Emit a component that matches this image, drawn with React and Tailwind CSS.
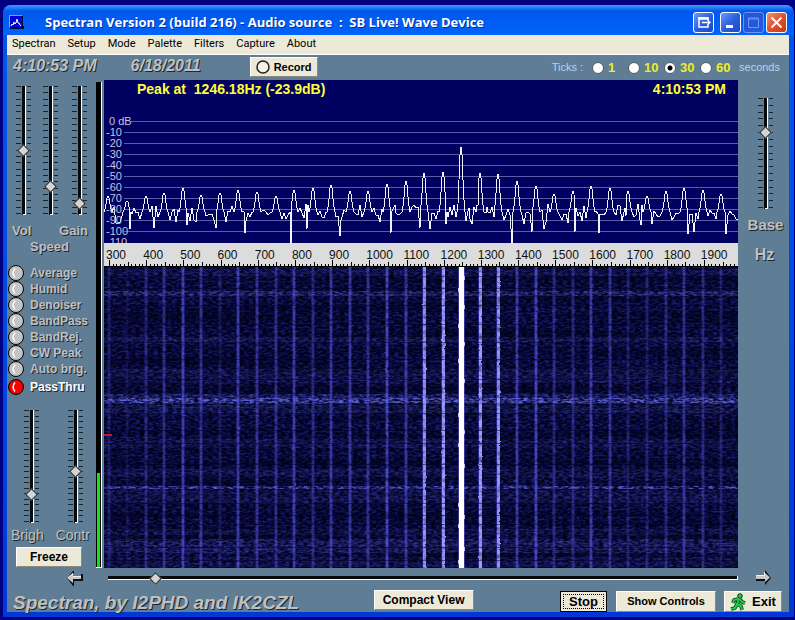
import React from "react";

const menus = ["Spectran", "Setup", "Mode", "Palette", "Filters", "Capture", "About"];

const filters = [
  { name: "Average" },
  { name: "Humid" },
  { name: "Denoiser" },
  { name: "BandPass" },
  { name: "BandRej." },
  { name: "CW Peak" },
  { name: "Auto brig." },
  { name: "PassThru", active: true },
];

const frequencies = Array.from({ length: 17 }, (_, i) => 300 + i * 100);
const levels = ["0 dB", "-10", "-20", "-30", "-40", "-50", "-60", "-70", "-80", "-90", "-100", "-110"];

// top of every 50 Hz harmonic in the plot, left to right
const peakTops = [
  116, 121, 116, 113, 108, 115, 113, 110, 112, 116, 110, 108, 105, 111, 111, 104, 101, 93, 92, 67,
  93, 94, 101, 106, 114, 111, 106, 108, 111, 116, 111, 108, 110, 114,
];

// deep notches and shoulders between the harmonics
const marks = {
  26: 149, 50: 148, 83: 145, 112: 148, 141: 153, 187: 163, 203: 149, 236: 156, 237: 140,
  287: 153, 291: 125, 310: 125, 316: 148, 326: 149, 342: 144, 346: 127, 350: 125, 354: 124,
  365: 128, 370: 127, 374: 126, 383: 127, 390: 137, 408: 163, 428: 152, 440: 149, 471: 152,
  495: 153, 522: 136, 537: 145, 584: 154, 590: 152, 622: 154,
};

// strength of every harmonic in the waterfall
const lines = [
  0.3, 0.15, 0.4, 0.5, 0.7, 0.55, 0.25, 0.65, 0.55, 0.5, 0.65, 0.45, 0.6, 0.6, 0.55, 0.75, 0.6,
  0.95, 1, 0, 1, 0.95, 0.65, 0.75, 0.45, 0.4, 0.65, 0.55, 0.3, 0.35, 0.45, 0.55, 0.45, 0.3,
];

const bands = [
  { y: 2, h: 8, o: 0.2 },
  { y: 24, h: 5, o: 0.5 },
  { y: 70, h: 6, o: 0.25 },
  { y: 102, h: 14, o: 0.2 },
  { y: 127, h: 10, o: 0.45 },
  { y: 131, h: 5, o: 0.85 },
  { y: 138, h: 9, o: 0.3 },
  { y: 172, h: 9, o: 0.2 },
  { y: 202, h: 8, o: 0.2 },
  { y: 219, h: 3, o: 0.85 },
  { y: 223, h: 14, o: 0.2 },
  { y: 262, h: 6, o: 0.2 },
  { y: 272, h: 14, o: 0.35 },
  { y: 290, h: 10, o: 0.2 },
];

const peakX = (i) => 4.5 + i * 18.57;

function buildTrace() {
  let seed = 41;
  const rand = () => {
    seed = (seed * 16807) % 2147483647;
    return seed / 2147483647;
  };
  const points = [];
  for (let x = 0; x <= 634; x += 1) {
    const i = Math.max(0, Math.min(33, Math.round((x - 4.5) / 18.57)));
    const d = Math.round(x - peakX(i));
    const top = peakTops[i];
    if (marks[x]) {
      points.push([x, marks[x]]);
    } else if (Math.abs(d) <= 4) {
      const share = [0, 0.12, 0.5, 0.82, 1][Math.abs(d)];
      points.push([x, Math.round(top + (132 - top) * share)]);
    } else if (x % 2 === 0) {
      points.push([x, Math.round(123 + rand() * 11 + rand() * 11)]);
    }
  }
  return points.map((p) => p.join(",")).join(" ");
}

const trace = buildTrace();

function Spectrum() {
  return (
    <div className="relative h-[163px] bg-[#000060] overflow-hidden">
      <svg className="block w-full h-full" viewBox="0 0 634 163" preserveAspectRatio="none">
        {levels.slice(0, 11).map((level, i) => (
          <rect key={level} x={i === 0 ? 27 : 20} y={41 + i * 11} width="614" height="1" fill="#5c5ca4" />
        ))}
        <polyline points={trace} fill="none" stroke="#f4f4ff" strokeWidth="1" shapeRendering="crispEdges" />
      </svg>
      <div className="absolute inset-x-0 top-0 pt-px pl-[33px] pr-3 flex justify-between text-sm leading-4 font-bold text-[#ffff38] whitespace-pre">
        <span>Peak at  1246.18Hz (-23.9dB)</span>
        <span>4:10:53 PM</span>
      </div>
      <div className="absolute left-0.5 top-9 text-[11px] leading-[11px] text-[#c4c4dc]">
        {levels.map((level, i) => (
          <div key={level} className={i === 0 ? "pl-[3px]" : ""}>
            {level}
          </div>
        ))}
      </div>
    </div>
  );
}

function FrequencyScale() {
  const ticks = Array.from({ length: 171 }, (_, i) => i);
  return (
    <div className="h-6 bg-[#dcdcdc] flex flex-col justify-between">
      <div className="grid grid-cols-17 pt-1 pl-[2px] text-xs leading-4 text-[#101010]">
        {frequencies.map((f) => (
          <span key={f}>{f}</span>
        ))}
      </div>
      <svg className="block w-full h-[7px] shrink-0 -mt-3" viewBox="0 0 634 7" preserveAspectRatio="none">
        <rect x="0" y="6" width="634" height="1" fill="#000" />
        {ticks.map((i) => {
          const h = i % 10 === 0 ? 6 : i % 5 === 0 ? 4 : 2;
          return <rect key={i} x={Math.round(5 + (i * 37.19) / 10)} y={6 - h} width="1" height={h} fill="#000" />;
        })}
      </svg>
    </div>
  );
}

function Waterfall() {
  const gaps = [9, 21, 38, 57, 75, 92, 112, 146, 163, 176, 197, 236, 248, 257, 280, 293];
  return (
    <svg className="block w-full h-0 grow min-h-[280px] bg-[#04042c]" viewBox="0 0 634 301" preserveAspectRatio="none">
      <defs>
        <filter id="floor" x="0" y="0" width="100%" height="100%" colorInterpolationFilters="sRGB">
          <feTurbulence type="fractalNoise" baseFrequency="0.22 0.5" numOctaves="3" seed="5" />
          <feColorMatrix values="0 0 0 0.25 -0.09  0 0 0 0.25 -0.085  0 0 0 0.95 -0.24  0 0 0 0 1" />
        </filter>
        <filter id="rows" x="0" y="0" width="100%" height="100%" colorInterpolationFilters="sRGB">
          <feTurbulence type="fractalNoise" baseFrequency="0.004 0.11" numOctaves="3" seed="12" />
          <feColorMatrix values="0 0 0 0 0  0 0 0 0 0.01  0 0 0 0 0.1  0 0 0 3.2 -1.3" />
        </filter>
        <filter id="sparkle" x="0" y="0" width="100%" height="100%" colorInterpolationFilters="sRGB">
          <feTurbulence type="fractalNoise" baseFrequency="0.2 0.55" numOctaves="3" seed="9" />
          <feColorMatrix values="0 0 0 0.5 0.02  0 0 0 0.5 0.04  0 0 0 0.9 0.22  0 0 0 3 -0.95" />
        </filter>
        <filter id="rough" x="0" y="0" width="100%" height="100%" colorInterpolationFilters="sRGB">
          <feTurbulence type="fractalNoise" baseFrequency="0.15 0.25" numOctaves="2" seed="3" result="noise" />
          <feColorMatrix in="noise" values="0 0 0 0 1  0 0 0 0 1  0 0 0 0 1  0 0 0 1.4 0.2" result="holes" />
          <feComposite in="SourceGraphic" in2="holes" operator="in" result="cut" />
          <feDisplacementMap in="cut" in2="noise" scale="2" xChannelSelector="R" yChannelSelector="G" />
        </filter>
      </defs>
      <rect width="634" height="301" filter="url(#floor)" />
      <rect width="634" height="301" filter="url(#rows)" opacity="0.5" />
      {bands.map((band) => (
        <rect key={band.y} y={band.y} width="634" height={band.h} opacity={band.o} filter="url(#sparkle)" />
      ))}
      <g filter="url(#rough)">
        <rect width="634" height="301" fill="none" />
        {lines.map((strength, i) => (
          <g key={i} opacity={strength}>
            <rect x={Math.round(peakX(i)) - 2} y="0" width="4" height="301" fill="#3434b4" opacity="0.75" />
            <rect
              x={Math.round(peakX(i)) - 1}
              y="0"
              width={strength > 0.9 ? 3 : 2}
              height="301"
              fill={strength > 0.9 ? "#9c9cff" : "#5c5cdc"}
            />
          </g>
        ))}
      </g>
      {gaps.map((y) => (
        <rect key={y} y={y} width="634" height="1" fill="#000030" opacity="0.5" />
      ))}
      <rect x="354" y="0" width="7" height="301" fill="#5050c8" opacity="0.6" />
      <rect x="355" y="0" width="5" height="301" fill="#fff" />
      {gaps.map((y, i) => (
        <rect key={y} x={i % 2 ? 354 : 360} y={y} width="1" height="4" fill="#fff" opacity="0.7" />
      ))}
      <rect y="167" width="8" height="2" fill="#c01828" />
    </svg>
  );
}

// vertical fader, the value grows downwards
function Fader({ label, value, marks = 21, tall }) {
  return (
    <div className="grid w-[15px]">
      <svg className="col-start-1 row-start-1 block" width="15" height={tall} aria-hidden="true">
        {Array.from({ length: marks }, (_, i) => {
          const y = Math.round((i * (tall - 2)) / (marks - 1));
          return (
            <g key={i} fill="#18242c">
              <rect x="0" y={y} width="5" height="1" />
              <rect x="11" y={y} width="4" height="1" />
            </g>
          );
        })}
        <rect x="6" y="0" width="3" height={tall} fill="#0a0a0a" />
        <rect x="9" y="0" width="1" height={tall} fill="#fff" />
        <rect x="7" y={tall - 1} width="3" height="1" fill="#fff" />
      </svg>
      <input
        type="range"
        aria-label={label}
        defaultValue={value}
        className="col-start-1 row-start-1 m-0 w-[15px] h-0 min-h-full appearance-none bg-transparent [writing-mode:vertical-lr] [&::-webkit-slider-thumb]:appearance-none [&::-webkit-slider-thumb]:w-[9px] [&::-webkit-slider-thumb]:h-[9px] [&::-webkit-slider-thumb]:rotate-45 [&::-webkit-slider-thumb]:bg-[#d4d4d4] [&::-webkit-slider-thumb]:border [&::-webkit-slider-thumb]:border-[#202020]"
      />
    </div>
  );
}

function Led({ name, active }) {
  return (
    <label className={`flex items-center h-4 gap-1.5 text-xs font-bold ${active ? "mt-0.5 text-white" : "text-[#c0c0c0]"} [text-shadow:1px_1px_0_#1c262c]`}>
      <span className="grid w-4 h-4">
        <input
          type="checkbox"
          defaultChecked={active}
          className="col-start-1 row-start-1 w-4 h-4 appearance-none rounded-full border border-black bg-[#c4c4c4] checked:bg-[#f80000]"
        />
        <svg className="col-start-1 row-start-1 pointer-events-none" viewBox="0 0 16 16" aria-hidden="true">
          <path d="M7 3.500Q3.200 8 7 12.500" fill="none" stroke="#fff" strokeWidth="1.5" />
        </svg>
      </span>
      {name}
    </label>
  );
}

function Button({ className = "", children }) {
  return (
    <button
      type="button"
      className={`flex items-center justify-center font-bold text-black bg-[#ece9d8] border border-t-white border-l-white border-r-[#8c8a78] border-b-[#8c8a78] ${className}`}
    >
      {children}
    </button>
  );
}

function Arrow({ label, flip }) {
  return (
    <button type="button" aria-label={label} className="block">
      <svg width="18" height="18" viewBox="0 0 18 18" aria-hidden="true">
        {flip ? (
          <>
            <path d="M2 7h9V1l6 8-6 7v-4H2z" fill="#101010" />
            <path d="M2 6h8V3l6 5.500-5 4.500v-3H2z" fill="#c8c8c8" />
            <path d="M2 6.500h8.500V3" fill="none" stroke="#f0f0f0" />
          </>
        ) : (
          <>
            <path d="M1 9l6-7h1v5h7V5h2v7H8v5H7z" fill="#101010" />
            <path d="M1 9l6-5v3h8v3H7v4z" fill="#c8c8c8" />
            <path d="M2 8.500l5-4v3h8" fill="none" stroke="#f0f0f0" />
          </>
        )}
      </svg>
    </button>
  );
}

function CaptionButton({ label, className, children }) {
  return (
    <button type="button" aria-label={label} className={`w-[21px] h-[21px] rounded-[3px] border flex items-center justify-center ${className}`}>
      <svg width="15" height="15" viewBox="0 0 15 15" fill="none" stroke="#fff" aria-hidden="true">
        {children}
      </svg>
    </button>
  );
}

function TitleBar() {
  const blue = "border-white bg-linear-to-br from-[#6c98f8] via-[#2c60e0] to-[#1848c8]";
  return (
    <header className="h-[30px] shrink-0 rounded-t-lg flex items-center pl-1.5 pr-[7px] pt-1 bg-linear-to-b from-[#4098ff] via-[#0058ec] via-20% to-[#0064fc]">
      <svg width="15" height="14" viewBox="0 0 15 14" aria-hidden="true">
        <path d="M0 0h13v1H1v11H0z" fill="#9098d0" />
        <rect x="1" y="1" width="12" height="11" fill="#0000d8" />
        <path d="M13 1h1v10h1v3H1v-2h12z" fill="#000830" />
        <path d="M2 11l1-2 1 1 1-3 1 2 1-1 1-4 1 4 1 0 1 2 1 1" fill="none" stroke="#fff" />
      </svg>
      <h1 className="pl-[21px] grow font-['Open_Sans',sans-serif] text-[13px] leading-4 font-bold text-white whitespace-pre truncate [text-shadow:1px_1px_0_#0030a0]">
        Spectran Version 2 (build 216) - Audio source  :  SB Live! Wave Device
      </h1>
      <div className="flex shrink-0 gap-0.5">
        <CaptionButton label="Send to tray" className={`mr-1 ${blue}`}>
          <path d="M12 5V3H3v9h9v-2" strokeWidth="1.500" />
          <path d="M2.300 3.500h10.400" strokeWidth="2.500" />
          <path d="M6 7.500h8M11.500 5l2.500 2.500-2.500 2.500" strokeWidth="1.300" />
        </CaptionButton>
        <CaptionButton label="Minimize" className={blue}>
          <path d="M3 11.500h7" strokeWidth="3" />
        </CaptionButton>
        <CaptionButton label="Maximize" className="border-[#6c94ec] bg-[#2458dc]">
          <path d="M2.500 3h10v9.500h-10zM2 4h11" stroke="#7098f0" strokeWidth="1" />
        </CaptionButton>
        <CaptionButton label="Close" className="border-white bg-linear-to-br from-[#f09070] via-[#e0502c] to-[#c83810]">
          <path d="M2.500 2.500l10 10M12.500 2.500l-10 10" strokeWidth="2" />
        </CaptionButton>
      </div>
    </header>
  );
}

function Toolbar() {
  return (
    <div className="h-[25px] flex items-start pl-1.5 pr-[9px]">
      <div className="flex gap-[34px] text-base leading-[22px] font-bold italic text-[#c0c0c0] [text-shadow:1px_1px_0_#1c262c]">
        <span>4:10:53 PM</span>
        <span>6/18/2011</span>
      </div>
      <Button className="ml-[49px] mt-0.5 w-[68px] h-5 gap-1 text-[11px]">
        <svg width="14" height="14" viewBox="0 0 14 14" aria-hidden="true">
          <circle cx="7" cy="7" r="6" fill="#f4f2e8" stroke="#202020" strokeWidth="1.500" />
        </svg>
        Record
      </Button>
      <fieldset className="ml-auto h-[25px] flex items-center text-[11px] text-[#b4d4ec]">
        <span className="pr-[9px]">Ticks :</span>
        {["1", "10", "30", "60"].map((s) => (
          <label key={s} className="flex items-center w-9 gap-1 text-[13px] font-bold text-[#ecec30]">
            <input
              type="radio"
              name="ticks"
              defaultChecked={s === "30"}
              className="appearance-none w-3 h-3 rounded-full bg-white border border-[#4c5c68] checked:bg-[radial-gradient(circle,#000_2px,#fff_3px)]"
            />
            {s}
          </label>
        ))}
        <span className="pl-[3px]">seconds</span>
      </fieldset>
    </div>
  );
}

function LeftPanel() {
  return (
    <aside className="w-[89px] shrink-0 pt-1.5 text-[#c0c0c0] [text-shadow:1px_1px_0_#1c262c]">
      <div className="flex pl-[9px]">
        <Fader label="Volume" value={50} tall={129} />
        <div className="w-3" />
        <Fader label="Speed" value={80} tall={129} />
        <div className="w-3.5" />
        <Fader label="Gain" value={94} tall={129} />
      </div>
      <div className="pt-2 pl-[5px] pr-2 flex justify-between text-[13px] leading-4 font-bold">
        <span>Vol</span>
        <span>Gain</span>
      </div>
      <div className="pr-1 text-center text-[13px] leading-4 font-bold">Speed</div>
      <div className="pt-2.5 pl-px">
        {filters.map((filter) => (
          <Led key={filter.name} {...filter} />
        ))}
      </div>
      <div className="pt-[15px] pl-[17px] flex gap-[29px]">
        <Fader label="Brightness" value={77} tall={113} />
        <Fader label="Contrast" value={55} tall={113} />
      </div>
      <div className="pt-1 pl-1 flex gap-3 text-sm leading-4">
        <span>Brigh</span>
        <span>Contr</span>
      </div>
      <Button className="ml-[9px] mt-1 w-[66px] h-5 text-xs">Freeze</Button>
    </aside>
  );
}

function App() {
  return (
    <div className="min-h-screen flex bg-[#000080] pt-[5px] pb-[3px] pl-[3px] pr-px font-['Liberation_Sans',Arial,sans-serif]">
      <main className="grow min-w-0 flex flex-col rounded-t-lg bg-linear-to-b from-[#0058ec] to-[#0038d8] pb-[5px]">
        <TitleBar />
        <div className="grow flex flex-col ml-1 mr-[5px] bg-[#5f7d94]">
          <nav className="h-5 pl-[5px] flex items-center gap-3 bg-[#ece9d8] border-b border-white font-[Roboto,sans-serif] text-[11px] text-black">
            {menus.map((menu) => (
              <button type="button" key={menu}>
                {menu}
              </button>
            ))}
          </nav>
          <Toolbar />
          <div className="grow flex">
            <LeftPanel />
            <div className="w-2 shrink-0 flex flex-col pt-0.5">
              <div className="grow w-[6px] bg-black border-r border-b border-white flex flex-col justify-end pl-px pr-px">
                <div className="h-[94px] bg-[#18e018]" />
              </div>
            </div>
            <section className="grow min-w-0 flex flex-col">
              <Spectrum />
              <FrequencyScale />
              <Waterfall />
            </section>
            <aside className="w-[51px] shrink-0 pt-[18px] flex flex-col items-center font-bold text-[#c0c0c0] [text-shadow:1px_1px_0_#1c262c]">
              <div className="pl-1">
                <Fader label="Base" value={29} marks={17} tall={111} />
              </div>
              <div className="pt-2 pl-1 text-[15px] leading-4">Base</div>
              <div className="pt-3.5 pl-0.5 text-base leading-4">Hz</div>
            </aside>
          </div>
          <div className="h-5 flex items-center pl-[59px] pr-[17px]">
            <Arrow label="Scroll left" />
            <div className="grow grid items-center ml-6 mr-4">
              <div className="col-start-1 row-start-1 h-1 bg-[#0a0a0a] border-b border-r border-white" />
              <input
                type="range"
                aria-label="Frequency offset"
                defaultValue="7"
                className="col-start-1 row-start-1 m-0 w-full h-4 appearance-none bg-transparent [&::-webkit-slider-thumb]:appearance-none [&::-webkit-slider-thumb]:w-[9px] [&::-webkit-slider-thumb]:h-[9px] [&::-webkit-slider-thumb]:rotate-45 [&::-webkit-slider-thumb]:bg-[#d4d4d4] [&::-webkit-slider-thumb]:border [&::-webkit-slider-thumb]:border-[#202020]"
              />
            </div>
            <Arrow label="Scroll right" flip />
          </div>
          <footer className="h-6 flex items-end pl-[6px] pr-[7px]">
            <span className="self-center pt-1.5 shrink-0 text-[19px] leading-[18px] font-bold italic text-[#c0c0c0] [text-shadow:1px_1px_0_#1c262c]">
              Spectran, by I2PHD and IK2CZL
            </span>
            <div className="grow flex justify-center pr-3 self-start pt-0.5">
              <Button className="w-[100px] h-5 text-xs">Compact View</Button>
            </div>
            <div className="flex items-end">
              <Button className="w-[47px] h-[21px] p-0.5 text-[13px] outline outline-black -outline-offset-1">
                <span className="w-full h-full flex items-center justify-center border border-dotted border-black">Stop</span>
              </Button>
              <Button className="ml-[9px] w-[100px] h-[21px] text-[11px]">Show Controls</Button>
              <Button className="ml-2 w-[58px] h-[21px] gap-1.5 text-[13px]">
                <svg width="16" height="18" viewBox="0 0 16 18" aria-hidden="true">
                  <g fill="none" stroke="#083808" strokeWidth="3.600" strokeLinejoin="round">
                    <path d="M9 6L7 11l4 2 1 4M7 11l-2 4-4 1M8 6L4 7 3 10M10 6l2 3 3 1" />
                  </g>
                  <g fill="none" stroke="#18d050" strokeWidth="2" strokeLinejoin="round">
                    <path d="M9 6L7 11l4 2 1 4M7 11l-2 4-4 1M8 6L4 7 3 10M10 6l2 3 3 1" />
                  </g>
                  <circle cx="10" cy="3" r="2.300" fill="#18d050" stroke="#083808" />
                </svg>
                Exit
              </Button>
            </div>
          </footer>
        </div>
      </main>
    </div>
  );
}

export default App;
